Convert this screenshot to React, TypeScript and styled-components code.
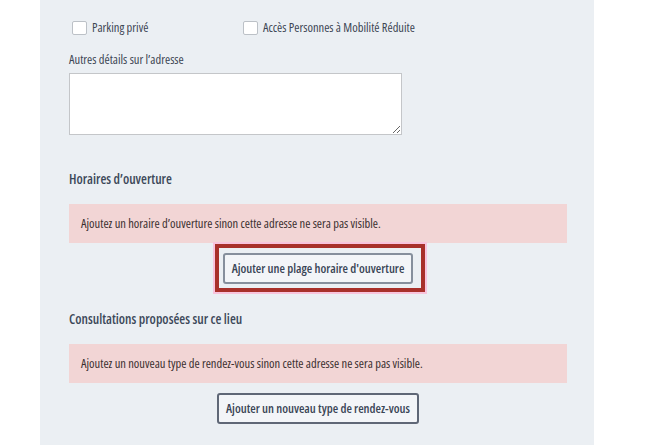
import React from "react";
import styled, { createGlobalStyle } from "styled-components";

const Global = createGlobalStyle`
  html, body { margin: 0; padding: 0; background: #ffffff; }
  body {
    font-family: "Open Sans", "Lato", sans-serif;
    font-stretch: 75%;
    color: #3a4556;
  }
  button, textarea { font-stretch: 75%; }
`;

const Page = styled.div`
  display: flex;
  min-height: 445px;
`;

const Panel = styled.main`
  margin-left: 40px;
  width: 554px;
  min-height: 445px;
  background: #ebeff3;
  padding: 21px 27px 0 29px;
  box-sizing: border-box;
  display: flex;
  flex-direction: column;
`;

const CheckRow = styled.div`
  display: flex;
  align-items: center;
  margin-left: 3px;
`;

const CheckItem = styled.label<{ $w?: number }>`
  display: flex;
  align-items: center;
  gap: 5px;
  width: ${(p) => (p.$w ? `${p.$w}px` : "auto")};
  font-size: 12.5px;
  color: #3d4654;
  line-height: 14px;
`;

const Box = styled.span`
  width: 13px;
  height: 12px;
  background: #ffffff;
  border: 1px solid #bcc1c7;
  border-radius: 2px;
`;

const FieldLabel = styled.div`
  margin-top: 18px;
  font-size: 12.5px;
  line-height: 14px;
  color: #3d4654;
`;

const TextArea = styled.textarea`
  margin-top: 6px;
  width: 333px;
  height: 62px;
  box-sizing: border-box;
  border: 1px solid #c4c6c9;
  background: #ffffff;
  font-family: inherit;
`;

const Heading = styled.h3<{ $mt: number }>`
  margin: ${(p) => p.$mt}px 0 0;
  font-size: 13.5px;
  line-height: 20px;
  font-weight: 600;
  color: #3c4859;
`;

const Alert = styled.div`
  margin-top: 15px;
  height: 39px;
  background: #f2d5d5;
  display: flex;
  align-items: center;
  padding-left: 12px;
  font-size: 12.5px;
  color: #3b3030;
`;

const ButtonRow = styled.div`
  display: flex;
  justify-content: center;
  margin-top: 10px;
`;

const Anchor = styled.div`
  position: relative;
`;

const Button = styled.button<{ $border: string }>`
  height: 31px;
  padding: 0 7px;
  background: #f3f5f8;
  border: 2px solid ${(p) => p.$border};
  border-radius: 3px;
  font-family: inherit;
  font-size: 12.5px;
  font-weight: 600;
  color: #3a4556;
  cursor: pointer;
`;

const Highlight = styled.span`
  position: absolute;
  top: -9px;
  left: -8px;
  right: -12px;
  bottom: -8px;
  border: 4px solid #a8302a;
  box-shadow: 0 0 0 2px #f8c4dc;
  pointer-events: none;
`;

export default function App() {
  return (
    <>
      <Global />
      <Page>
        <Panel>
          <CheckRow>
            <CheckItem $w={171}>
              <Box />
              Parking privé
            </CheckItem>
            <CheckItem>
              <Box />
              Accès Personnes à Mobilité Réduite
            </CheckItem>
          </CheckRow>
          <FieldLabel>Autres détails sur l’adresse</FieldLabel>
          <TextArea />
          <Heading $mt={34}>Horaires d’ouverture</Heading>
          <Alert>Ajoutez un horaire d’ouverture sinon cette adresse ne sera pas visible.</Alert>
          <ButtonRow>
            <Anchor>
              <Button $border="#868f9c">Ajouter une plage horaire d'ouverture</Button>
              <Highlight />
            </Anchor>
          </ButtonRow>
          <Heading $mt={25}>Consultations proposées sur ce lieu</Heading>
          <Alert>Ajoutez un nouveau type de rendez-vous sinon cette adresse ne sera pas visible.</Alert>
          <ButtonRow>
            <Button $border="#5f6776">Ajouter un nouveau type de rendez-vous</Button>
          </ButtonRow>
        </Panel>
      </Page>
    </>
  );
}
